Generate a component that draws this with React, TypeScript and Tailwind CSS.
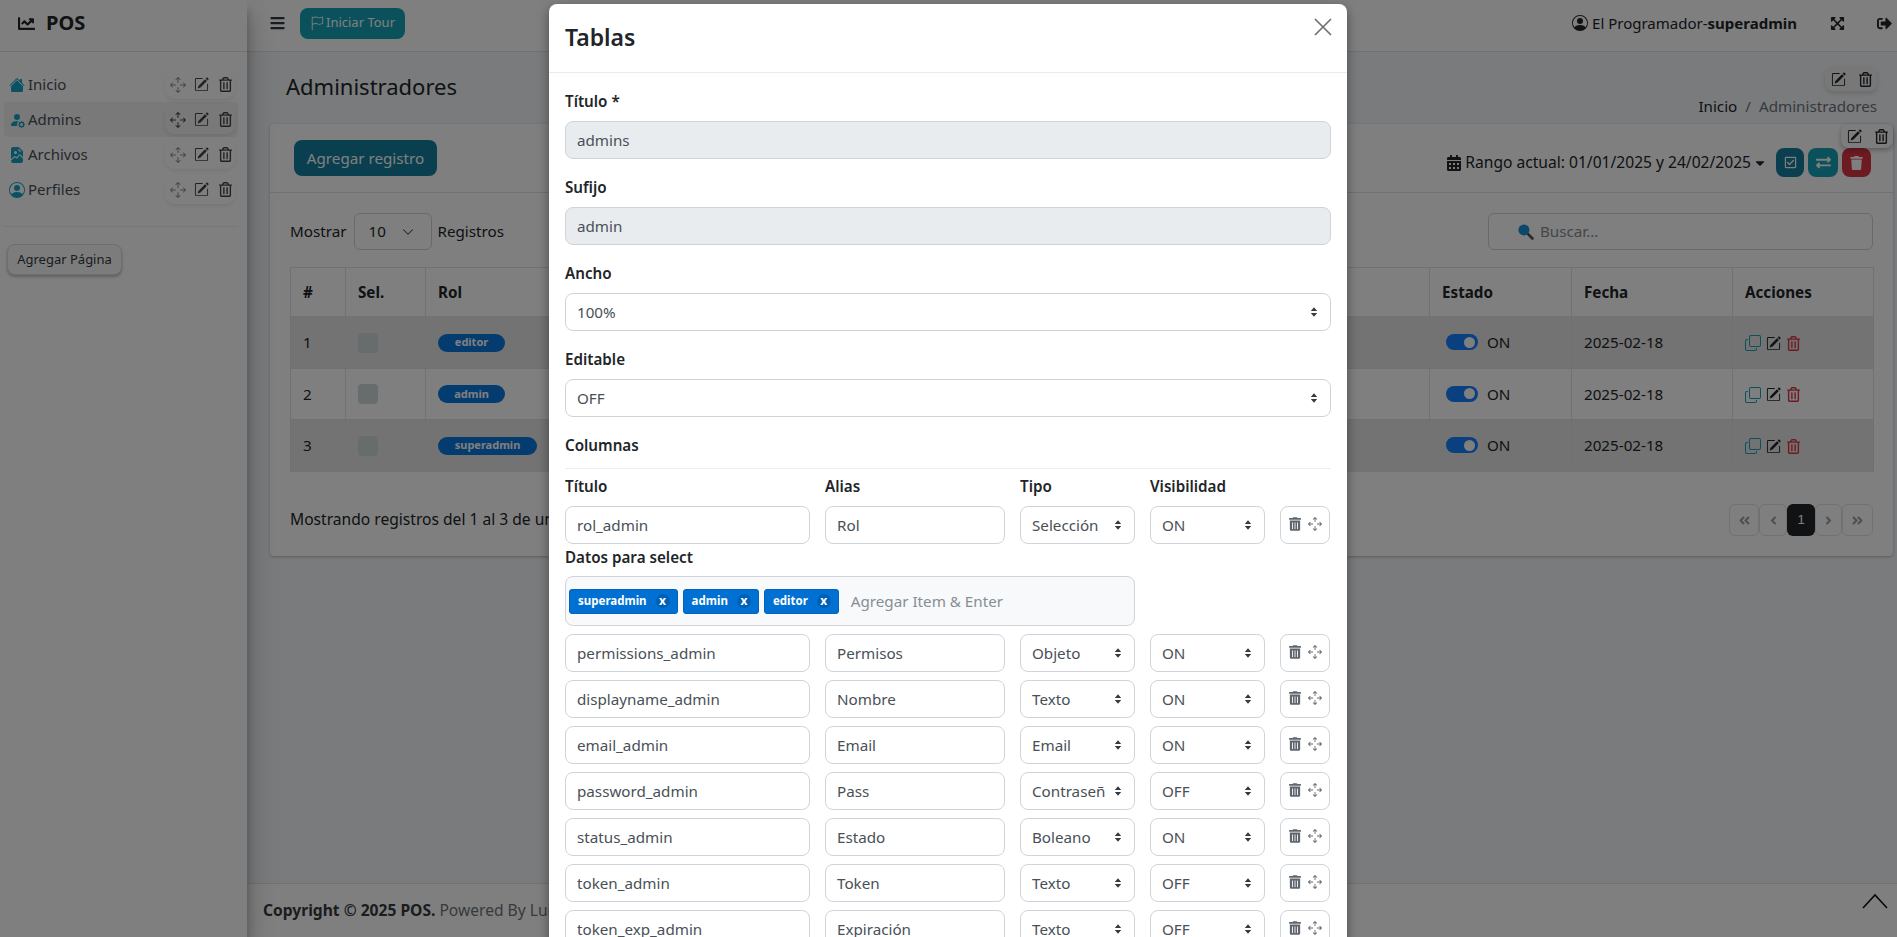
import React from "react";
import {
  FaChartLine, FaExpandArrowsAlt, FaSignOutAlt,
  FaCalendarAlt, FaCaretDown, FaRegTrashAlt, FaTrashAlt, FaRegCheckSquare, FaExchangeAlt, FaTrash, FaBars,
  FaAngleDoubleLeft, FaAngleDoubleRight, FaAngleLeft, FaAngleRight,
} from "react-icons/fa";
import {
  BsArrowsMove, BsPencilSquare, BsFlag, BsCopy, BsChevronDown, BsHouseFill, BsPersonFillGear,
  BsFileEarmarkImageFill, BsPersonCircle,
} from "react-icons/bs";

const FONT = "font-['Noto_Sans',sans-serif]";

function Arrows() {
  return (
    <svg viewBox="0 0 16 16" className="w-4 h-4 shrink-0 text-[#343a40]" fill="currentColor">
      <path d="M8 3.2 11.2 7H4.8zM8 12.8 4.8 9h6.4z" />
    </svg>
  );
}

function Sel({ v, cls, clip }: { v: string; cls: string; clip?: boolean }) {
  return (
    <div className={`${cls} h-[38px] flex items-center justify-between pl-[11px] pr-[8px] border border-[#ced4da] rounded-[8px] bg-white text-[#495057] overflow-hidden`}>
      <span className={`overflow-hidden whitespace-nowrap ${clip ? "w-[73px]" : ""}`}>{v}</span>
      <Arrows />
    </div>
  );
}

function Inp({ v, cls, disabled }: { v: string; cls: string; disabled?: boolean }) {
  return (
    <input
      readOnly
      value={v}
      className={`${cls} h-[38px] px-[11px] border border-[#ced4da] rounded-[8px] text-[#495057] outline-none ${disabled ? "bg-[#e9ecef]" : "bg-white"}`}
    />
  );
}

function Field({ label, children }: { label: string; children: React.ReactNode }) {
  return (
    <div className="mb-[16px]">
      <div className="h-[24px] leading-[24px] mb-[8px] font-semibold text-[#212529]">{label}</div>
      {children}
    </div>
  );
}

function RowActions() {
  return (
    <div className="w-[50px] h-[38px] ml-[15px] shrink-0 border border-[#ced4da] rounded-[8px] flex items-center justify-center gap-[7px] pb-[3px] text-[#5f666d]">
      <FaTrashAlt className="w-[12px] h-[14px]" />
      <BsArrowsMove className="w-[14px] h-[14px]" />
    </div>
  );
}

function ColRow({ t, a, ty, vis, mb = "mb-[8px]", clip }: { t: string; a: string; ty: string; vis: string; mb?: string; clip?: boolean }) {
  return (
    <div className={`flex items-center ${mb}`}>
      <Inp v={t} cls="w-[245px] shrink-0" />
      <Inp v={a} cls="w-[180px] ml-[15px] shrink-0" />
      <Sel v={ty} clip={clip} cls="w-[115px] ml-[15px] shrink-0" />
      <Sel v={vis} cls="w-[115px] ml-[15px] shrink-0" />
      <RowActions />
    </div>
  );
}

function Tag({ t }: { t: string }) {
  return (
    <span className="h-[25px] flex items-center bg-[#0070d2] text-white rounded-[3px] font-bold text-[11.5px] pl-[8px] pr-[7px] border border-[#0062b8]">
      {t}
      <span className="ml-[9px] w-[14px] h-[14px] rounded-full bg-[#0060b4] flex items-center justify-center text-[12px] leading-none">x</span>
    </span>
  );
}

function NavItem({ icon, label, active }: { icon: React.ReactNode; label: string; active?: boolean }) {
  return (
    <div className={`h-[35px] flex items-center rounded-[4px] ml-[4px] mr-[9px] pl-[3px] pr-[3px] ${active ? "bg-[#f2f2f2]" : ""}`}>
      <span className="w-[20px] flex justify-center text-[#17a2c4] text-[16px] shrink-0">{icon}</span>
      <span className="ml-[1px] text-[15px] text-[#495057] flex-1">{label}</span>
      <span className="w-[70px] h-[29px] rounded-[10px] flex items-center justify-center gap-[10px] pl-[2px] text-[#444] shadow-[0_2px_4px_rgba(0,0,0,0.08)]">
        <BsArrowsMove className={`w-[16px] h-[16px] -mr-[2px] ${active ? "" : "opacity-60"}`} />
        <BsPencilSquare className="w-[15px] h-[15px]" />
        <FaRegTrashAlt className="w-[13px] h-[15px]" />
      </span>
    </div>
  );
}

function Pill() {
  return (
    <>
      <BsPencilSquare className="w-[15px] h-[15px]" />
      <FaRegTrashAlt className="w-[13px] h-[15px]" />
    </>
  );
}

const rows = [
  { n: 1, rol: "editor", w: "w-[67px]", bg: "bg-[#e6e6e6]" },
  { n: 2, rol: "admin", w: "w-[67px]", bg: "bg-white" },
  { n: 3, rol: "superadmin", w: "w-[99px]", bg: "bg-[#e6e6e6]" },
];
const hs = ["h-[52px]", "h-[51px]", "h-[52px]"];

function PageBtn({ children, cls }: { children: React.ReactNode; cls: string }) {
  return (
    <span className={`${cls} h-[32px] flex items-center justify-center border border-[#dee2e6] rounded-[6px] text-[#9aa0a6]`}>
      {children}
    </span>
  );
}

export default function App() {
  const th = "border border-[#dee2e6] text-left pl-[12px] font-bold text-[#212529]";
  const td = "border border-[#dee2e6] pl-[12px] text-[#212529]";
  return (
    <div className={`${FONT} relative w-[1897px] h-[937px] overflow-hidden flex bg-[#f4f6f9] text-[#212529] text-[15.2px]`}>
      {/* Sidebar */}
      <aside className="w-[247px] shrink-0 bg-white shadow-[0_14px_28px_rgba(0,0,0,0.25),0_10px_10px_rgba(0,0,0,0.22)] z-10">
        <div className="h-[52px] border-b border-[#dee2e6] flex items-center pl-[17px] pb-[5px]">
          <FaChartLine className="w-[19px] h-[17px]" />
          <span className="ml-[10px] font-bold text-[20px]">POS</span>
        </div>
        <nav className="pt-[15px] pb-[19px]">
          <NavItem icon={<BsHouseFill />} label="Inicio" />
          <NavItem icon={<BsPersonFillGear />} label="Admins" active />
          <NavItem icon={<BsFileEarmarkImageFill />} label="Archivos" />
          <NavItem icon={<BsPersonCircle />} label="Perfiles" />
        </nav>
        <div className="ml-[4px] mr-[9px] border-t border-[#eee] pt-[17px] pl-[3px]">
          <button className="w-[115px] h-[31px] rounded-[8px] bg-[#f8f9fa] border border-[#ddd] shadow-[0_2px_3px_rgba(0,0,0,0.25)] text-[13px] text-[#343a40]">
            Agregar Página
          </button>
        </div>
      </aside>

      {/* Main */}
      <div className="flex-1 flex flex-col min-w-0">
        <header className="h-[52px] bg-white border-b border-[#dee2e6] flex items-center pl-[23px] pr-[5px] pb-[5px] shrink-0">
          <FaBars className="w-[15px] h-[16px] text-[#343a40]" />
          <button className="ml-[15px] w-[105px] h-[31px] rounded-[8px] bg-[#17a2b8] text-white text-[13px] flex items-center justify-center gap-[2px]">
            <BsFlag className="w-[14px] h-[15px]" />
            Iniciar Tour
          </button>
          <div className="ml-auto flex items-center text-[15px]">
            <BsPersonCircle className="w-[16px] h-[16px]" />
            <span className="ml-[4px]">El Programador-<b>superadmin</b></span>
            <FaExpandArrowsAlt className="ml-[33px] w-[15px] h-[15px]" />
            <FaSignOutAlt className="ml-[32px] w-[15px] h-[15px]" />
          </div>
        </header>

        <section className="h-[72px] shrink-0 relative flex justify-between pl-[39px] pr-[20px]">
          <h1 className="mt-[17px] text-[22px] leading-[34px] text-[#212529]">Administradores</h1>
          <div className="mt-[43px] h-[22px] leading-[22px] text-[#6c757d]">
            <span className="text-[#212529]">Inicio</span>
            <span className="mx-[8px]">/</span>
            Administradores
          </div>
          <div className="absolute right-[20px] top-[15px] w-[52px] h-[24px] rounded-[8px] bg-[#f0f0f0] shadow-[0_2px_5px_rgba(0,0,0,0.15)] flex items-center justify-center gap-[13px] text-[#212529]">
            <Pill />
          </div>
        </section>

        <main className="relative ml-[23px] mr-[4px] h-[432px] bg-white rounded-[4px] shadow-[0_1px_3px_rgba(0,0,0,0.25)] shrink-0">
          <div className="absolute right-0 top-0 w-[52px] h-[24px] rounded-[8px] bg-[#fbfbfb] shadow-[0_2px_5px_rgba(0,0,0,0.3)] flex items-center justify-center gap-[13px] text-[#212529]">
            <Pill />
          </div>
          <div className="h-[69px] border-b border-[#dee2e6] flex items-start pl-[24px] pr-[22px] pt-[16px]">
            <button className="w-[143px] h-[36px] rounded-[8px] bg-[#147f9e] text-white">Agregar registro</button>
            <div className="ml-auto mt-[8px] flex items-start">
              <div className="mt-[3px] flex items-center text-[15.6px]">
                <FaCalendarAlt className="w-[14px] h-[16px]" />
                <span className="ml-[4px]">Rango actual: 01/01/2025 y 24/02/2025</span>
                <FaCaretDown className="ml-[3px] w-[12px] h-[14px]" />
              </div>
              <button className="ml-[10px] w-[28px] h-[29px] rounded-[8px] bg-[#147f9e] text-white flex items-center justify-center"><FaRegCheckSquare className="w-[13px] h-[13px]" /></button>
              <button className="ml-[4px] w-[30px] h-[29px] rounded-[8px] bg-[#17a2b8] text-white flex items-center justify-center"><FaExchangeAlt className="w-[15px] h-[15px]" /></button>
              <button className="ml-[4px] w-[29px] h-[29px] rounded-[8px] bg-[#dc3545] text-white flex items-center justify-center"><FaTrash className="w-[13px] h-[14px]" /></button>
            </div>
          </div>

          <div className="px-[20px] pt-[20px]">
            <div className="flex items-center h-[37px]">
              <span>Mostrar</span>
              <div className="ml-[8px] w-[78px] h-[37px] border border-[#ced4da] rounded-[6px] flex items-center justify-between pl-[13px] pr-[17px]">
                <span>10</span>
                <BsChevronDown className="w-[12px] h-[12px]" />
              </div>
              <span className="ml-[5px]">Registros</span>
              <div className="ml-auto w-[385px] h-[37px] border border-[#ced4da] rounded-[6px] flex items-center pl-[28px]">
                <svg viewBox="0 0 16 16" className="w-[17px] h-[17px]">
                  <path d="M10 10l4.5 4.5" stroke="#555" strokeWidth="2.6" strokeLinecap="round" />
                  <circle cx="6.5" cy="6.5" r="5.2" fill="#1d8fd8" />
                </svg>
                <span className="ml-[6px] text-[#868e96]">Buscar...</span>
              </div>
            </div>

            <table className="mt-[17px] w-[1583px] table-fixed border-collapse">
              <colgroup>
                <col className="w-[55px]" />
                <col className="w-[80px]" />
                <col className="w-[250px]" />
                <col className="w-[250px]" />
                <col className="w-[254px]" />
                <col className="w-[250px]" />
                <col className="w-[142px]" />
                <col className="w-[161px]" />
                <col className="w-[141px]" />
              </colgroup>
              <thead>
                <tr className="h-[49px]">
                  <th className={th}>#</th>
                  <th className={th}>Sel.</th>
                  <th className={th}>Rol</th>
                  <th className={th}>Permisos</th>
                  <th className={th}>Nombre</th>
                  <th className={th}>Email</th>
                  <th className={th}>Estado</th>
                  <th className={th}>Fecha</th>
                  <th className={th}>Acciones</th>
                </tr>
              </thead>
              <tbody>
                {rows.map((r, i) => (
                  <tr key={r.n} className={`${hs[i]} ${r.bg}`}>
                    <td className={td}>{r.n}</td>
                    <td className={td}><div className="w-[20px] h-[20px] rounded-[4px] bg-[#cfd9d9]" /></td>
                    <td className={td}>
                      <span className={`${r.w} h-[18px] rounded-full bg-[#0b78e0] text-white text-[11px] font-bold flex items-center justify-center`}>{r.rol}</span>
                    </td>
                    <td className={td} />
                    <td className={td} />
                    <td className={td} />
                    <td className={td}>
                      <div className="flex items-center pl-[4px]">
                        <span className="w-[32px] h-[16px] rounded-full bg-[#1480ff] flex items-center justify-end pr-[3px]">
                          <span className="w-[11px] h-[11px] rounded-full bg-white" />
                        </span>
                        <span className="ml-[9px]">ON</span>
                      </div>
                    </td>
                    <td className={td}>2025-02-18</td>
                    <td className={td}>
                      <div className="flex items-center pt-[1px]">
                        <BsCopy className="w-[16px] h-[16px] text-[#17a2b8]" />
                        <BsPencilSquare className="ml-[5px] w-[15px] h-[15px] text-[#212529]" />
                        <FaRegTrashAlt className="ml-[6px] w-[13px] h-[15px] text-[#dc3545]" />
                      </div>
                    </td>
                  </tr>
                ))}
              </tbody>
            </table>

            <div className="mt-[32px] flex items-center justify-between h-[32px]">
              <span className="text-[15.6px]">Mostrando registros del 1 al 3 de un total de 3 registros</span>
              <div className="flex text-[13px]">
                <PageBtn cls="w-[30px]"><FaAngleDoubleLeft /></PageBtn>
                <PageBtn cls="w-[28px]"><FaAngleLeft /></PageBtn>
                <span className="w-[28px] h-[32px] rounded-[6px] bg-[#212529] text-white flex items-center justify-center font-['Liberation_Sans',sans-serif] text-[13px]">1</span>
                <PageBtn cls="w-[27px]"><FaAngleRight /></PageBtn>
                <PageBtn cls="w-[31px]"><FaAngleDoubleRight /></PageBtn>
              </div>
            </div>
          </div>
        </main>

        <footer className="mt-auto h-[54px] border-t border-[#dee2e6] bg-white pl-[16px] flex items-center text-[#6c757d] text-[15.6px] shrink-0">
          <span className="text-[#343a40] font-bold mr-[4px]">Copyright © 2025 POS.</span> Powered By Luis Programador
        </footer>
        <svg viewBox="0 0 28 18" className="absolute right-[8px] top-[892px] w-[28px] h-[18px]" fill="none" stroke="#111" strokeWidth="1.6">
          <path d="M2 16 14 3l12 13" />
        </svg>
      </div>

      {/* Backdrop */}
      <div className="absolute inset-0 bg-black/50 z-20" />

      {/* Modal */}
      <div className="absolute z-30 left-[549px] top-[4px] w-[798px] bg-white rounded-[8px] shadow-[0_4px_12px_rgba(0,0,0,0.4)]">
        <div className="h-[69px] border-b border-[#e9ecef] flex items-start justify-between pl-[16px] pr-[15px]">
          <h5 className="mt-[15px] text-[23px] leading-[36px] font-semibold text-[#212529]">Tablas</h5>
          <svg viewBox="0 0 18 18" className="mt-[14px] w-[18px] h-[18px]" stroke="#6f6f6f" strokeWidth="1.7" fill="none">
            <path d="M1 1l16 16M17 1 1 17" />
          </svg>
        </div>
        <div className="pl-[16px] pr-[16px] pt-[16px]">
          <Field label="Título *"><Inp v="admins" cls="w-full block" disabled /></Field>
          <Field label="Sufijo"><Inp v="admin" cls="w-full block" disabled /></Field>
          <Field label="Ancho"><Sel v="100%" cls="w-full" /></Field>
          <Field label="Editable"><Sel v="OFF" cls="w-full" /></Field>

          <div className="h-[24px] leading-[24px] mt-[1px] font-semibold">Columnas</div>
          <div className="mt-[11px] border-t border-[#eee]" />
          <div className="mt-[5px] flex h-[24px] leading-[24px] font-semibold mb-[8px]">
            <span className="w-[260px]">Título</span>
            <span className="w-[195px]">Alias</span>
            <span className="w-[130px]">Tipo</span>
            <span>Visibilidad</span>
          </div>
          <ColRow t="rol_admin" a="Rol" ty="Selección" vis="ON" mb="" />
          <div className="h-[24px] leading-[24px] mt-[1px] font-semibold">Datos para select</div>
          <div className="mt-[7px] w-[570px] h-[50px] bg-[#f8f9fa] border border-[#ced4da] rounded-[8px] flex items-center pl-[3px] gap-[5px] mb-[8px]">
            <Tag t="superadmin" />
            <Tag t="admin" />
            <Tag t="editor" />
            <span className="ml-[7px] text-[#868e96]">Agregar Item &amp; Enter</span>
          </div>
          <ColRow t="permissions_admin" a="Permisos" ty="Objeto" vis="ON" />
          <ColRow t="displayname_admin" a="Nombre" ty="Texto" vis="ON" />
          <ColRow t="email_admin" a="Email" ty="Email" vis="ON" />
          <ColRow t="password_admin" a="Pass" ty="Contraseña" vis="OFF" clip />
          <ColRow t="status_admin" a="Estado" ty="Boleano" vis="ON" />
          <ColRow t="token_admin" a="Token" ty="Texto" vis="OFF" />
          <ColRow t="token_exp_admin" a="Expiración" ty="Texto" vis="OFF" />
        </div>
      </div>
    </div>
  );
}
